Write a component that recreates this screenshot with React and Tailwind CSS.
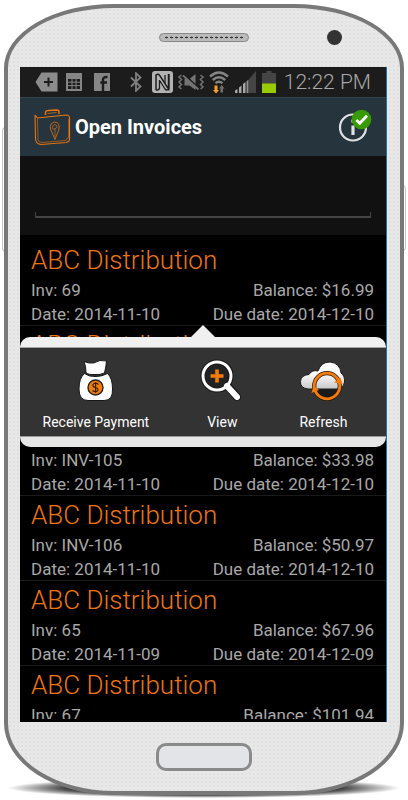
import React, { useState } from 'react';

const INVOICES = [
  { id: '69', customer: 'ABC Distribution', date: '2014-11-10', due: '2014-12-10', balance: '$16.99' },
  { id: 'INV-104', customer: 'ABC Distribution', date: '2014-11-10', due: '2014-12-10', balance: '$16.99' },
  { id: 'INV-105', customer: 'ABC Distribution', date: '2014-11-10', due: '2014-12-10', balance: '$33.98' },
  { id: 'INV-106', customer: 'ABC Distribution', date: '2014-11-10', due: '2014-12-10', balance: '$50.97' },
  { id: '65', customer: 'ABC Distribution', date: '2014-11-09', due: '2014-12-09', balance: '$67.96' },
  { id: '67', customer: 'ABC Distribution', date: '2014-11-09', due: '2014-12-09', balance: '$101.94' },
];

/* ── Status bar icons ── */

function TagIcon() {
  return (
    <svg width="23" height="20" viewBox="0 0 23 20" className="shrink-0">
      <path d="M6.5 .5H22.5V19.5H6.5L.5 10Z" fill="#8c8c8c" />
      <path d="M13.5 5.5V14.5M9 10H18" stroke="#1c1c1c" strokeWidth="2" />
    </svg>
  );
}

function CalendarIcon() {
  return (
    <svg width="16" height="18" viewBox="0 0 16 18" className="ml-2 shrink-0">
      <rect width="16" height="18" fill="#858585" />
      <path d="M2 6H14V16H2Z" fill="#1c1c1c" />
      <path d="M2 9.2H14M2 12.6H14M6 6V16M10 6V16" stroke="#858585" strokeWidth="1" />
    </svg>
  );
}

function FacebookIcon() {
  return (
    <svg width="16" height="18" viewBox="0 0 16 18" className="ml-3 shrink-0">
      <rect width="16" height="18" fill="#858585" />
      <path d="M9 18V6.5Q9 3.6 13.5 4M6.3 9.5H13" stroke="#1c1c1c" strokeWidth="2.4" fill="none" />
    </svg>
  );
}

function BluetoothIcon() {
  return (
    <svg width="12" height="20" viewBox="0 0 12 20" className="shrink-0">
      <path d="M1 5.5L10.5 14.5L6 18.8V1.2L10.5 5.5L1 14.5" fill="none" stroke="#808080" strokeWidth="1.8" />
    </svg>
  );
}

function NfcIcon() {
  return (
    <svg width="21" height="22" viewBox="0 0 21 22" className="ml-2.5 shrink-0">
      <rect width="21" height="22" rx="3" fill="#b3b3b3" />
      <path d="M4 19V4Q6.5 2 8 5L16.5 18V3" fill="none" stroke="#1c1c1c" strokeWidth="1.5" />
      <path d="M7.5 9V17.5Q6 19.5 4 19M13 4V12M8 10L13 18Q14.5 20 17 18V3" fill="none" stroke="#1c1c1c" strokeWidth="1.3" />
    </svg>
  );
}

function VibrateOffIcon() {
  return (
    <svg width="28" height="20" viewBox="0 0 27 20" className="ml-1 shrink-0">
      <path d="M4 3L1.5 5L4 7.5L1.5 10L4 12.5L1.5 15L4 17M23 3L25.5 5L23 7.5L25.5 10L23 12.5L25.5 15L23 17" fill="none" stroke="#707070" strokeWidth="1.6" />
      <path d="M7 7H12L18 2V18L12 13.5H7Z" fill="#747474" />
      <path d="M6.5 2.5L21.5 16.5" stroke="#1c1c1c" strokeWidth="2" />
      <path d="M5.5 3.5L21 17.5" stroke="#747474" strokeWidth="1.8" />
    </svg>
  );
}

function WifiIcon() {
  return (
    <svg width="20" height="23" viewBox="0 0 20 23" className="ml-1 shrink-0">
      <g fill="none" stroke="#858585" strokeWidth="2.4">
        <path d="M1 5.5Q10 -2.5 19 5.5" />
        <path d="M3.8 9Q10 3.5 16.2 9" />
        <path d="M6.5 12.2Q10 9.3 13.5 12.2" />
      </g>
      <path d="M5.5 14.5H8.5V19H10L7 22.5L4 19H5.5Z" fill="#ff9d1e" />
      <path d="M11.5 21.5V17.5H10L12.8 14L15.5 17.5H14V21.5Z" fill="#707070" />
    </svg>
  );
}

function SignalIcon() {
  return (
    <svg width="21" height="22" viewBox="0 0 21 22" className="ml-1.5 shrink-0">
      <path d="M14 8L21 0V22H14Z" fill="#454545" />
      <path d="M0 19.5L2.5 18V22H0ZM4 16.5L6.5 14.5V22H4ZM8 13L10.5 11V22H8Z" fill="#a8a8a8" />
      <path d="M11.5 10.5L13.5 8.5V22H11.5Z" fill="#909090" />
    </svg>
  );
}

function BatteryIcon() {
  return (
    <svg width="14" height="22" viewBox="0 0 14 22" className="ml-1.5 shrink-0">
      <path d="M4.5 0H9.5V2H14V22H0V2H4.5Z" fill="#454545" />
      <rect y="12.5" width="14" height="9.5" fill="#99cc00" />
    </svg>
  );
}

/* ── App icons ── */

function BriefcaseLogo() {
  return (
    <svg width="37" height="37" viewBox="0 0 37 37" fill="none" stroke="#ea750f" className="shrink-0">
      <path d="M11.5 6V3.5Q11.5 1.5 14 1.5L23 1Q25 1 25 3V5" strokeWidth="1.4" />
      <path d="M13.5 4.5L22.5 3.5" strokeWidth=".7" />
      <path d="M1 6L3.5 9L32 6Q35.5 6 35.5 9V30Q35.5 33 32 33.5L7 35.5Q2 35 1.5 30L1 6" strokeWidth="1.1" />
      <path d="M3.5 9.5L4 31Q4.5 33.5 8 33.5L31 31.5Q33.5 31 33.5 28.5" strokeWidth=".6" />
      <path d="M35.3 10V29" strokeWidth="1.6" />
      <path d="M21 30.5L16.5 20Q15.5 14 20.5 13Q26 13 25 20Z" strokeWidth=".8" />
      <path d="M21 28V19.5M19 20.5Q17.5 16 21 15.5Q24 16.5 22.5 19Z" strokeWidth=".6" />
    </svg>
  );
}

function InfoBadge() {
  return (
    <svg width="34" height="36" viewBox="0 0 34 36" fill="none">
      <circle cx="15" cy="18.5" r="13" stroke="#dfe2e4" strokeWidth="2.2" />
      <path d="M15 16.5V26M15 10.5V13.5" stroke="#dfe2e4" strokeWidth="3.2" />
      <circle cx="23.5" cy="10.5" r="9.8" fill="#379a06" />
      <path d="M18.3 11L21.8 14.3L29 6.8" stroke="#fff" strokeWidth="2.8" />
    </svg>
  );
}

function MoneyBagIcon() {
  return (
    <svg width="44" height="44" viewBox="0 0 44 44">
      <g fill="#fff" stroke="#161616" strokeWidth="1">
        <path d="M10.5 15.5Q15 19 22 18.5Q28 18.5 33.5 15.5Q38.5 20 38.5 31Q39 42.5 30 42.5H14Q5 42.5 5 31Q5 20 10.5 15.5Z" />
        <path d="M10 3.5Q14 5.5 19.5 5Q26 1 32.5 3Q32 9 30.5 15Q26 17 21 16.5Q14 17 12 14.5Q12 8 10 3.5Z" />
      </g>
      <circle cx="21.5" cy="29.5" r="7.5" fill="#f57c0b" stroke="#222" strokeWidth="1.4" />
      <path d="M24.5 26.5Q21 24 19 26.5Q18.5 29 21.5 29.5Q25 30.5 23.5 33Q21 34.5 18.5 32.5M21.6 24V35" fill="none" stroke="#332211" strokeWidth="1.2" />
    </svg>
  );
}

function MagnifierIcon() {
  return (
    <svg width="44" height="44" viewBox="0 0 44 44" fill="none">
      <path d="M27 27L37 39" stroke="#161616" strokeWidth="8" strokeLinecap="round" />
      <circle cx="17" cy="18" r="14" fill="#222" stroke="#161616" strokeWidth="5" />
      <path d="M27 28L37 39" stroke="#fff" strokeWidth="6" strokeLinecap="round" />
      <circle cx="17" cy="18" r="14" stroke="#fff" strokeWidth="3" />
      <path d="M17 11.5V24.5M10.5 18H23.5" stroke="#f57c0b" strokeWidth="3.6" />
    </svg>
  );
}

function CloudRefreshIcon() {
  return (
    <svg width="46" height="44" viewBox="0 0 46 44" fill="none">
      <defs>
        <linearGradient id="cloud" x1="0" y1="0" x2="0" y2="1">
          <stop offset=".4" stopColor="#fff" />
          <stop offset="1" stopColor="#c8c8c8" />
        </linearGradient>
      </defs>
      <path d="M8 31Q0 30 .5 23.5Q1 17 9 16.5Q12 11.5 18 13Q21 4 30 4Q40 5 41 15Q45 18 44.5 24Q43 31 38 31Z" fill="url(#cloud)" stroke="#1c1c1c" strokeWidth="1" />
      <path d="M15 31A12 12 0 0 0 39 31Z" fill="#1b1b1b" />
      <circle cx="27" cy="28" r="12.8" stroke="#2a1a0a" strokeWidth="4.2" />
      <circle cx="27" cy="28" r="12.8" stroke="#f57c0b" strokeWidth="2.8" />
      <path d="M34 24.5L42.5 26L40.5 19.5Z" fill="#f57c0b" />
      <path d="M11.5 35L13.5 28L19 32Z" fill="#f57c0b" />
    </svg>
  );
}

const ACTIONS = [
  { label: 'Receive Payment', Icon: MoneyBagIcon },
  { label: 'View', Icon: MagnifierIcon },
  { label: 'Refresh', Icon: CloudRefreshIcon },
];

/**
 * QuickActions — popup that hangs below the selected invoice
 */
function QuickActions() {
  return (
    <div className="absolute inset-x-0 top-full z-10">
      <svg width="24" height="12" viewBox="0 0 24 12" className="mx-auto block">
        <path d="M12 0L24 12H0Z" fill="#f0f0f0" />
      </svg>
      <div className="h-[11px] rounded-t-[10px] border-b border-[#a5a5a5] bg-[#f0f0f0]" />
      <div className="grid grid-cols-[3fr_2fr_2fr] bg-[#333] pr-3">
        {ACTIONS.map(({ label, Icon }) => (
          <button key={label} type="button" className="flex flex-col items-center gap-2.5 pt-2.5 pb-1 text-sm leading-5 whitespace-nowrap text-white">
            <Icon />
            {label}
          </button>
        ))}
      </div>
      <div className="h-[11px] rounded-b-[10px] border-t border-[#999] bg-[#e6e6e6]" />
    </div>
  );
}

function InvoiceRow({ invoice, selected }) {
  return (
    <li className="relative h-[85px] border-b border-[#1a1a1a] pt-0.5 pr-3 pl-[11px]">
      <h2 className="text-[26px] leading-[35px] font-light text-[#ee7410]">{invoice.customer}</h2>
      <div className="flex justify-between">
        <span>Inv: {invoice.id}</span>
        <span>Balance: {invoice.balance}</span>
      </div>
      <div className="flex justify-between">
        <span>Date: {invoice.date}</span>
        <span>Due date: {invoice.due}</span>
      </div>
      {selected && <QuickActions />}
    </li>
  );
}

export default function App() {
  const [query, setQuery] = useState('');

  return (
    <div className="relative flex h-screen flex-col bg-white px-1 pt-1 pb-[5px] font-[Roboto,sans-serif]">
      {/* Shadow under the phone */}
      <div className="absolute inset-x-2 bottom-0.5 h-5 bg-[radial-gradient(closest-side,#000_60%,transparent)]" />
      {/* Side keys */}
      <div className="absolute top-[127px] left-0.5 h-[125px] w-1 rounded-l-sm border border-[#c4c4c4]" />
      <div className="absolute top-[185px] right-0.5 h-[66px] w-1 rounded-r-sm border border-[#c4c4c4]" />

      <div className="relative flex min-h-0 flex-1 flex-col border-4 border-[#787878] bg-[#e8e8e8] bg-[radial-gradient(#e0e0e0_1px,transparent_1px)] bg-[size:4px_4px] [border-radius:110px_110px_110px_110px/64px_64px_72px_72px]">
        <div className="grid h-[59px] grid-cols-[1fr_auto_1fr] items-center">
          <div className="col-start-2 flex h-[9px] w-[90px] items-center rounded-full border border-[#888] bg-[#bbb] px-1">
            <div className="h-[3px] w-full bg-[radial-gradient(#333_1px,transparent_2px)] bg-[size:5px_3px]" />
          </div>
          <div className="ml-[78px] size-[15px] rounded-full bg-[#333]" />
        </div>

        {/* Screen */}
        <main className="mr-[13px] ml-3 flex min-h-0 flex-1 flex-col border-r border-[#1972b0] bg-black pb-[3px]">
          <div className="flex h-[30px] items-center bg-[#1c1c1c] px-[15px]">
            <TagIcon />
            <CalendarIcon />
            <FacebookIcon />
            <div className="ml-auto flex items-center">
              <BluetoothIcon />
              <NfcIcon />
              <VibrateOffIcon />
              <WifiIcon />
              <SignalIcon />
              <BatteryIcon />
              <time className="ml-2 text-[21px] leading-7 font-light whitespace-nowrap text-[#a8a8a8]">12:22 PM</time>
            </div>
          </div>

          <header className="flex h-[59px] items-center border-t border-[#304650] bg-[#25343d] px-3.5">
            <BriefcaseLogo />
            <h1 className="ml-1 text-xl leading-6 font-bold text-white">Open Invoices</h1>
            <button type="button" aria-label="Info" className="ml-auto">
              <InfoBadge />
            </button>
          </header>

          <div className="flex h-[79px] items-end bg-[#111] px-[15px] pb-[17px]">
            <div className="flex w-full flex-col">
              <input
                type="text"
                aria-label="Search invoices"
                value={query}
                onChange={e => setQuery(e.target.value)}
                className="h-9 w-full bg-transparent px-2 text-base text-[#b0b0b0] outline-none"
              />
              <div className="h-1.5 border-x border-b-2 border-[#444]" />
            </div>
          </div>

          <ul className="min-h-0 flex-1 overflow-hidden pt-1.5 text-[17px] leading-6 text-[#a8a8a8]">
            {INVOICES.map((inv, i) => (
              <InvoiceRow key={inv.id} invoice={inv} selected={i === 0} />
            ))}
          </ul>
        </main>

        <div className="flex h-[69px] items-center justify-center">
          <button type="button" aria-label="Home" className="h-7 w-24 rounded-[10px] border-[3px] border-[#8a8a8a] bg-[#e3e4e8]" />
        </div>
      </div>
    </div>
  );
}
